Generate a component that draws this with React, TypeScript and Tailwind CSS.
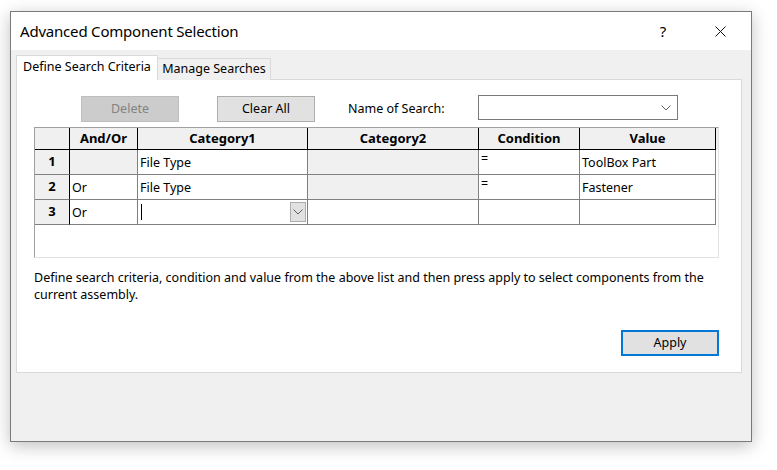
import React from "react";

const font = { fontFamily: '"Noto Sans", "Open Sans", sans-serif' };

function Chevron({ className = "" }: { className?: string }) {
  return (
    <svg width="10" height="6" viewBox="0 0 10 6" className={className}>
      <path d="M0.5 0.5 L5 5 L9.5 0.5" fill="none" stroke="#606060" strokeWidth="1" />
    </svg>
  );
}

const cols = "grid-cols-[35px_68px_170px_171px_101px_136px]";

type Row = { n: string; andOr: string; cat1: string; cond: string; value: string; editing?: boolean; locked?: boolean };

const rows: Row[] = [
  { n: "1", andOr: "", cat1: "File Type", cond: "=", value: "ToolBox Part", locked: true },
  { n: "2", andOr: "Or", cat1: "File Type", cond: "=", value: "Fastener" },
  { n: "3", andOr: "Or", cat1: "", cond: "", value: "", editing: true },
];

export default function App() {
  return (
    <div className="w-[777px] h-[470px] bg-white pl-[10px] pt-[11px] text-black" style={font}>
      <div className="w-[742px] h-[431px] border border-[#7a7a7a] flex flex-col shadow-[0_4px_16px_rgba(0,0,0,0.25)]">
        {/* Title bar */}
        <div className="h-[38px] bg-white flex items-center pl-[9px] shrink-0">
          <span className="text-[15px] tracking-[-0.2px]">Advanced Component Selection</span>
          <span className="ml-auto text-[15px] w-[20px] text-center mr-[42px]">?</span>
          <svg width="11" height="11" viewBox="0 0 11 11" className="mr-[25px]">
            <path d="M0.5 0.5 L10.5 10.5 M10.5 0.5 L0.5 10.5" stroke="#111" strokeWidth="1" />
          </svg>
        </div>

        {/* Body */}
        <div className="flex-1 bg-[#f0f0f0] px-[5px] pt-[5px]">
          {/* Tabs */}
          <div className="flex items-end h-[25px]">
            <div className="h-[25px] w-[142px] bg-white border border-b-0 border-[#d9d9d9] flex items-center justify-center pb-px text-[12.5px] relative z-10">
              Define Search Criteria
            </div>
            <div className="h-[22px] w-[113px] bg-[#f0f0f0] border border-l-0 border-b-0 border-[#d9d9d9] flex items-center justify-center text-[12.5px]">
              Manage Searches
            </div>
          </div>

          {/* Panel */}
          <div className="w-[726px] h-[294px] -mt-px bg-white border border-[#d9d9d9] pl-[17px] pr-[22px] pt-[15px] flex flex-col">
            <div className="flex items-start">
              <button className="ml-[47px] mt-px w-[98px] h-[26px] bg-[#cccccc] border border-[#bfbfbf] text-[12.5px] text-[#838383]">
                Delete
              </button>
              <button className="ml-[38px] mt-px w-[98px] h-[26px] bg-[#e1e1e1] border border-[#adadad] text-[12.5px]">
                Clear All
              </button>
              <span className="ml-[33px] mt-[5px] text-[12.5px]">Name of Search:</span>
              <div className="ml-auto mr-[41px] w-[200px] h-[25px] border border-[#7a7a7a] bg-white flex items-center justify-end pr-[6px]">
                <Chevron />
              </div>
            </div>

            {/* Grid */}
            <div className="mt-[5px] w-[685px] h-[131px] border border-[#a0a0a0] border-r-[#e3e3e3] border-b-[#e3e3e3] bg-white text-[12.5px]">
              <div className={`grid ${cols} h-[22px] bg-[#f0f0f0] font-bold text-[13px]`}>
                <div className="border-r border-b border-black" />
                {["And/Or", "Category1", "Category2", "Condition", "Value"].map((h) => (
                  <div key={h} className="border-r border-b border-black flex items-center justify-center">
                    {h}
                  </div>
                ))}
              </div>
              {rows.map((r) => (
                <div key={r.n} className={`grid ${cols} h-[25px]`}>
                  <div className="bg-[#f0f0f0] border-r border-r-black border-b border-b-[#808080] flex justify-center pt-[2px] font-bold text-[13px]">
                    {r.n}
                  </div>
                  <div className={`border-r border-b border-[#808080] pl-[2px] pt-[4px] ${r.locked ? "bg-[#f0f0f0]" : ""}`}>
                    {r.andOr}
                  </div>
                  {r.editing ? (
                    <div className="border-r border-b border-[#808080] flex items-center pl-[3px] pr-px">
                      <span className="w-px h-[16px] bg-black" />
                      <div className="ml-auto w-[16px] h-[20px] bg-[#e1e1e1] border border-[#adadad] flex items-center justify-center">
                        <Chevron />
                      </div>
                    </div>
                  ) : (
                    <div className="border-r border-b border-[#808080] pl-[2px] pt-[4px]">{r.cat1}</div>
                  )}
                  <div className={`border-r border-b border-[#808080] ${r.editing ? "" : "bg-[#f0f0f0]"}`} />
                  <div className="border-r border-b border-[#808080] pl-[2px] pt-0">{r.cond}</div>
                  <div className="border-r border-b border-[#808080] pl-[2px] pt-[4px]">{r.value}</div>
                </div>
              ))}
            </div>

            <p className="mt-[11px] text-[12.5px] leading-[17px]">
              Define search criteria, condition and value from the above list and then press apply to select components from the current assembly.
            </p>

            <div className="mt-auto mb-[16px] flex justify-end">
              <button className="w-[98px] h-[26px] bg-[#e1e1e1] border-2 border-[#0078d7] text-[12.5px]">
                Apply
              </button>
            </div>
          </div>
        </div>
      </div>
    </div>
  );
}
